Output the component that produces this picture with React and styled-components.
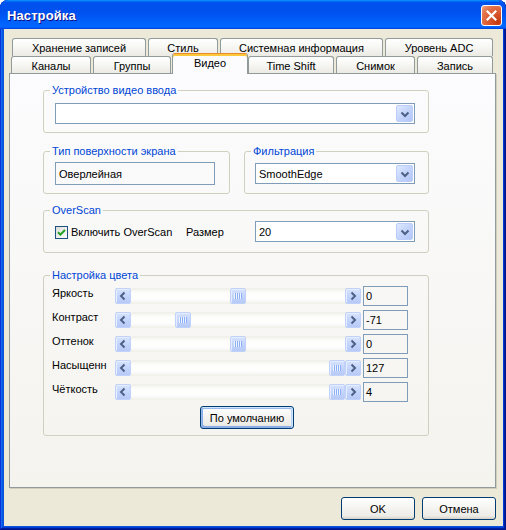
import React from "react";
import styled, { createGlobalStyle, css } from "styled-components";

const Global = createGlobalStyle`
  html, body { margin: 0; padding: 0; background: #ffffff; }
  body {
    font-family: "Liberation Sans", Arial, sans-serif;
    font-size: 11px;
    color: #000;
  }
  * { box-sizing: border-box; }
`;

const Window = styled.div`
  width: 506px;
  height: 530px;
  display: flex;
  flex-direction: column;
  background: #0855dd;
  border-radius: 8px 8px 0 0;
  overflow: hidden;
  box-shadow: inset -1px -1px #00138c, inset 1px 1px #0831d9,
    inset -2px -2px #001ea0, inset 2px 2px #166aee, inset -3px -3px #003bda,
    inset 3px 3px #0855dd;
`;

const TitleBar = styled.div`
  flex: none;
  height: 29px;
  display: flex;
  align-items: center;
  justify-content: space-between;
  padding: 0 4px 0 7px;
  border-radius: 8px 8px 0 0;
  background: linear-gradient(
    180deg,
    #0997ff,
    #0053ee 8%,
    #0050ee 40%,
    #0066ff 88%,
    #0066ff 93%,
    #005bff 95%,
    #0048e0 96%,
    #0048e0
  );
`;

const Title = styled.span`
  font-family: "Liberation Sans", Arial, sans-serif;
  font-weight: bold;
  font-size: 13px;
  color: #fff;
  text-shadow: 1px 1px #0f1089;
  padding-top: 2px;
  letter-spacing: 0.1px;
`;

const CloseButton = styled.div`
  width: 21px;
  height: 21px;
  border: 1px solid #fff;
  border-radius: 3px;
  background: radial-gradient(
    circle at 85% 85%,
    #c4380f 0%,
    #dd5a31 45%,
    #e4774f 75%,
    #f1a58a 100%
  );
  display: flex;
  align-items: center;
  justify-content: center;
  margin-top: 1px;
`;

const Client = styled.div`
  flex: 1;
  margin: 0 3px 4px 4px;
  background: #ece9d8;
  display: flex;
  flex-direction: column;
  padding: 9px 7px 6px 5px;
`;

const TabStrip = styled.div`
  display: flex;
  flex-direction: column;
  flex: none;
`;

const TabRow = styled.div`
  display: flex;
  gap: 2px;
  height: ${(p) => p.$h}px;
  margin-left: ${(p) => p.$ml}px;
  align-items: flex-end;
  position: relative;
`;

const Tab = styled.div`
  flex: none;
  width: ${(p) => p.$w}px;
  height: ${(p) => p.$h}px;
  border: 1px solid #919b9c;
  border-bottom: none;
  border-radius: 3px 3px 0 0;
  background: linear-gradient(180deg, #ffffff 0%, #f7f7f4 45%, #ebeae4 100%);
  display: flex;
  align-items: center;
  justify-content: center;
  white-space: nowrap;
  padding-top: 1px;
  ${(p) =>
    p.$active &&
    css`
      height: 21px;
      margin: 0 -2px -1px -1px;
      position: relative;
      z-index: 2;
      background: #fcfcfe;
      border-top: 1px solid #e68b2c;
      box-shadow: inset 0 2px #ffc73c;
      padding-top: 0;
      padding-bottom: 2px;
    `}
`;

const Panel = styled.div`
  flex: 1;
  position: relative;
  border: 1px solid #919b9c;
  box-shadow: 1px 1px 0 #d0cebf;
  background: linear-gradient(180deg, #fcfcfe 0%, #f4f3ee 100%);
  padding: 10px 0 0 33px;
  display: flex;
  flex-direction: column;
`;

const Group = styled.fieldset`
  margin: ${(p) => p.$mt || 0}px 0 0 0;
  min-width: 0;
  width: ${(p) => p.$w}px;
  border: 1px solid #d0d0bf;
  border-radius: 3px;
  padding: ${(p) => p.$pt}px 0 ${(p) => p.$pb}px 8px;
`;

const Legend = styled.legend`
  padding: 0 2px;
  margin-left: -2px;
  color: #0046d5;
  font-size: 11px;
  line-height: 13px;
`;

const GroupRow = styled.div`
  display: flex;
  gap: 14px;
  margin-top: ${(p) => p.$mt || 0}px;
`;

const ComboBox = styled.div`
  width: ${(p) => p.$w}px;
  height: 21px;
  margin-left: ${(p) => p.$ml || 0}px;
  border: 1px solid #7f9db9;
  background: #fff;
  display: flex;
  align-items: center;
  padding: 1px;
  flex: none;
`;

const ComboText = styled.span`
  flex: 1;
  padding-left: 2px;
  white-space: nowrap;
`;

const ComboButton = styled.span`
  width: 17px;
  height: 17px;
  border-radius: 2px;
  border: 1px solid #bccdf9;
  background: linear-gradient(135deg, #e0e9fe 0%, #c6d6fc 45%, #b2c6f6 100%);
  display: flex;
  align-items: center;
  justify-content: center;
`;

const TextBox = styled.div`
  width: 160px;
  height: 23px;
  margin-left: 3px;
  border: 1px solid #7f9db9;
  display: flex;
  align-items: center;
  padding-left: 3px;
`;

const OverRow = styled.div`
  display: flex;
  align-items: center;
  margin-left: 3px;
`;

const CheckArea = styled.label`
  width: 131px;
  display: flex;
  align-items: center;
  gap: 3px;
  white-space: nowrap;
`;

const CheckBox = styled.span`
  width: 13px;
  height: 13px;
  border: 1px solid #1c5180;
  background: linear-gradient(135deg, #dcdcd7 0%, #ffffff 100%);
  display: flex;
  align-items: center;
  justify-content: center;
  margin-top: 1px;
`;

const FieldLabel = styled.span`
  width: ${(p) => p.$w}px;
  white-space: nowrap;
`;

const ColorGrid = styled.div`
  display: grid;
  grid-template-columns: 61px 246px 45px;
  grid-auto-rows: 20px;
  column-gap: 2px;
  row-gap: 4px;
`;

const RowLabel = styled.span`
  align-self: start;
  line-height: 14px;
  white-space: nowrap;
`;

const ScrollBar = styled.div`
  align-self: center;
  height: 16px;
  display: flex;
  background: linear-gradient(
    180deg,
    #efeee7 0%,
    #fdfdfb 30%,
    #fefefe 70%,
    #f0efe9 100%
  );
`;

const blueKnob = css`
  border: 1px solid #c0d1fb;
  border-radius: 2px;
  background: linear-gradient(180deg, #d6e2fd 0%, #c5d5fc 50%, #b6caf7 100%);
  box-shadow: inset 1px 1px #e6eefe;
`;

const ScrollButton = styled.div`
  width: 16px;
  height: 16px;
  flex: none;
  ${blueKnob};
  display: flex;
  align-items: center;
  justify-content: center;
`;

const Track = styled.div`
  flex: 1;
  position: relative;
`;

const Thumb = styled.div`
  position: absolute;
  top: 0;
  width: 16px;
  height: 16px;
  ${blueKnob};
  display: flex;
  align-items: center;
  justify-content: center;
`;

const Grip = styled.span`
  width: 8px;
  height: 6px;
  background: repeating-linear-gradient(
    90deg,
    #eef4fe 0 1px,
    #8cb0f8 1px 2px
  );
`;

const ValueBox = styled.div`
  height: 20px;
  border: 1px solid #7f9db9;
  display: flex;
  align-items: center;
  padding-left: 2px;
`;

const Button = styled.button`
  width: ${(p) => p.$w}px;
  height: 23px;
  flex: none;
  padding: 0;
  font-family: "Liberation Sans", Arial, sans-serif;
  font-size: 11px;
  color: #000;
  border: 1px solid #003c74;
  border-radius: 3px;
  background: linear-gradient(180deg, #ffffff, #ecebe6 86%, #d6d0c5);
  ${(p) =>
    p.$focused &&
    css`
      box-shadow: inset -1px 1px #cee7ff, inset 1px 2px #98b8ea,
        inset -2px 2px #bcd4f6, inset 1px -1px #89ade4,
        inset 2px -2px #89ade4;
    `}
`;

const DefaultRow = styled.div`
  margin: 4px 0 0 148px;
  display: flex;
`;

const Footer = styled.div`
  flex: none;
  display: flex;
  justify-content: flex-end;
  gap: 7px;
  margin-top: 9px;
`;

const Chevron = ({ dir }) => {
  const d =
    dir === "left"
      ? "M8.5 3.5 L5 7 L8.5 10.5"
      : dir === "right"
      ? "M5.5 3.5 L9 7 L5.5 10.5"
      : "M3.5 5.5 L7 9 L10.5 5.5";
  return (
    <svg width="14" height="14" viewBox="0 0 14 14">
      <path d={d} fill="none" stroke="#4d6185" strokeWidth="2" />
    </svg>
  );
};

const Combo = ({ w, ml, text }) => (
  <ComboBox $w={w} $ml={ml}>
    <ComboText>{text}</ComboText>
    <ComboButton>
      <Chevron dir="down" />
    </ComboButton>
  </ComboBox>
);

const Slider = ({ value, min, max }) => {
  const frac = (value - min) / (max - min);
  const left = Math.round(frac * (214 - 16));
  return (
    <ScrollBar>
      <ScrollButton>
        <Chevron dir="left" />
      </ScrollButton>
      <Track>
        <Thumb style={{ left }}>
          <Grip />
        </Thumb>
      </Track>
      <ScrollButton>
        <Chevron dir="right" />
      </ScrollButton>
    </ScrollBar>
  );
};

const topTabs = [
  { t: "Хранение записей", w: 134 },
  { t: "Стиль", w: 70 },
  { t: "Системная информация", w: 163 },
  { t: "Уровень ADC", w: 108 },
];

const bottomTabs = [
  { t: "Каналы", w: 80 },
  { t: "Группы", w: 78 },
  { t: "Видео", w: 76, active: true },
  { t: "Time Shift", w: 86 },
  { t: "Снимок", w: 79 },
  { t: "Запись", w: 76 },
];

const colors = [
  { label: "Яркость", value: 0, min: -127, max: 127 },
  { label: "Контраст", value: -71, min: -127, max: 127 },
  { label: "Оттенок", value: 0, min: -127, max: 127 },
  { label: "Насыщенн", value: 127, min: 0, max: 127 },
  { label: "Чёткость", value: 4, min: 0, max: 4 },
];

export default function App() {
  return (
    <>
      <Global />
      <Window>
        <TitleBar>
          <Title>Настройка</Title>
          <CloseButton>
            <svg width="13" height="13" viewBox="0 0 13 13">
              <path
                d="M2.5 2.5 L10.5 10.5 M10.5 2.5 L2.5 10.5"
                stroke="#fff"
                strokeWidth="2.2"
                strokeLinecap="square"
              />
            </svg>
          </CloseButton>
        </TitleBar>
        <Client>
          <TabStrip>
            <TabRow $h={18} $ml={3}>
              {topTabs.map((t) => (
                <Tab key={t.t} $w={t.w} $h={18}>
                  {t.t}
                </Tab>
              ))}
            </TabRow>
            <TabRow $h={17} $ml={2}>
              {bottomTabs.map((t) => (
                <Tab key={t.t} $w={t.w} $h={17} $active={t.active}>
                  {t.t}
                </Tab>
              ))}
            </TabRow>
          </TabStrip>
          <Panel>
            <Group $w={386} $pt={6} $pb={8}>
              <Legend>Устройство видео ввода</Legend>
              <Combo w={360} ml={3} text="" />
            </Group>

            <GroupRow $mt={12}>
              <Group $w={187} $pt={4} $pb={8}>
                <Legend>Тип поверхности экрана</Legend>
                <TextBox>Оверлейная</TextBox>
              </Group>
              <Group $w={185} $pt={5} $pb={9}>
                <Legend>Фильтрация</Legend>
                <Combo w={160} ml={2} text="SmoothEdge" />
              </Group>
            </GroupRow>

            <Group $w={386} $mt={10} $pt={4} $pb={10}>
              <Legend>OverScan</Legend>
              <OverRow>
                <CheckArea>
                  <CheckBox>
                    <svg width="9" height="9" viewBox="0 0 9 9">
                      <path
                        d="M1 4.2 L3.4 6.6 L8 2"
                        fill="none"
                        stroke="#21a121"
                        strokeWidth="2"
                      />
                    </svg>
                  </CheckBox>
                  Включить OverScan
                </CheckArea>
                <FieldLabel $w={69}>Размер</FieldLabel>
                <Combo w={160} text="20" />
              </OverRow>
            </Group>

            <Group $w={386} $mt={16} $pt={4} $pb={6}>
              <Legend>Настройка цвета</Legend>
              <ColorGrid>
                {colors.map((c) => (
                  <React.Fragment key={c.label}>
                    <RowLabel>{c.label}</RowLabel>
                    <Slider value={c.value} min={c.min} max={c.max} />
                    <ValueBox>{c.value}</ValueBox>
                  </React.Fragment>
                ))}
              </ColorGrid>
              <DefaultRow>
                <Button $w={94} $focused>
                  По умолчанию
                </Button>
              </DefaultRow>
            </Group>
          </Panel>
          <Footer>
            <Button $w={74}>OK</Button>
            <Button $w={74}>Отмена</Button>
          </Footer>
        </Client>
      </Window>
    </>
  );
}
